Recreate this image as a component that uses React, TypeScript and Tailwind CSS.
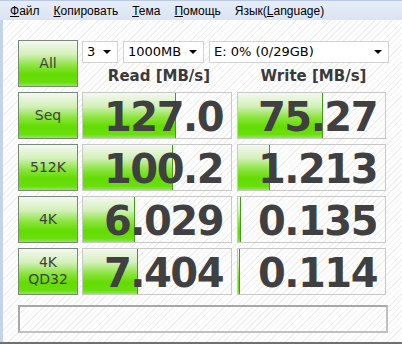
const hatch =
  "bg-[repeating-linear-gradient(135deg,#ffffff_0px,#ffffff_3px,#efefef_3px,#efefef_4px)]";

const green =
  "bg-[linear-gradient(to_bottom,#f4f7f1_0%,#d2f0b8_30%,#8ae43c_55%,#62dc00_75%,#6ade10_92%,#93e857_100%)]";

const menu = [
  { key: "Ф", rest: "айл" },
  { key: "К", rest: "опировать" },
  { key: "Т", rest: "ема" },
  { key: "П", rest: "омощь" },
];

const rows = [
  { label: ["Seq"], read: "127.0", readBar: 93, write: "75.27", writeBar: 85, comic: true },
  { label: ["512K"], read: "100.2", readBar: 90, write: "1.213", writeBar: 32 },
  { label: ["4K"], read: "6.029", readBar: 52, write: "0.135", writeBar: 3 },
  { label: ["4K", "QD32"], read: "7.404", readBar: 55, write: "0.114", writeBar: 2 },
];

function Btn({ lines, comic }: { lines: string[]; comic?: boolean }) {
  return (
    <div
      className={`flex h-[47px] w-[60px] flex-col items-center justify-center border border-[#7a887a] ${green} text-[#404040] font-['DejaVu_Sans',sans-serif] ${
        comic ? "text-[14px]" : "text-[14px] leading-[17px]"
      }`}
    >
      {lines.map((l) => (
        <span key={l}>{l}</span>
      ))}
    </div>
  );
}

function Cell({ value, bar, w }: { value: string; bar: number; w: string }) {
  return (
    <div className={`relative h-[47px] ${w} border border-[#c8c8c8]`}>
      <div
        className={`absolute left-0 top-0 bottom-0 ${green} border-r border-[#3f9f14]`}
        style={{ width: bar }}
      />
      <div className="relative flex h-full items-end justify-end pr-[8px] font-['DejaVu_Sans',sans-serif] text-[40px] leading-[42px] font-bold tracking-[-1.5px] text-[#404040]">
        {value}
      </div>
    </div>
  );
}

function Select({ text, w }: { text: string; w: string }) {
  return (
    <div
      className={`flex h-[22px] ${w} items-center justify-between border border-[#d2d2d2] bg-white pl-[4px] pr-[6px] font-['DejaVu_Sans',sans-serif] text-[13px] text-black`}
    >
      <span>{text}</span>
      <span className="h-0 w-0 border-x-[4px] border-t-[4px] border-x-transparent border-t-black" />
    </div>
  );
}

export default function App() {
  return (
    <div className="flex h-[344px] w-[402px] flex-col overflow-hidden bg-white">
      <div className="flex h-[20px] items-center gap-[14px] border-t border-[#b9c9e3] bg-[linear-gradient(to_bottom,#e6edf8,#dbe4f3)] pl-[10px] font-['Liberation_Sans',sans-serif] text-[12px] text-black">
        {menu.map((m) => (
          <span key={m.key}>
            <span className="underline">{m.key}</span>
            {m.rest}
          </span>
        ))}
        <span>
          Язык(<span className="underline">L</span>anguage)
        </span>
      </div>
      <div className={`flex flex-1 flex-col border-l-[3px] border-[#c3d3ea] pl-[15px] pt-[20px] ${hatch}`}>
        <div className="flex gap-[4px]">
          <Btn lines={["All"]} comic />
          <div className="flex flex-col">
            <div className="flex gap-[5px] pt-[1px]">
              <Select text="3" w="w-[36px]" />
              <Select text="1000MB" w="w-[81px]" />
              <Select text="E: 0% (0/29GB)" w="w-[180px]" />
            </div>
            <div className="flex gap-[5px] pt-[2px] font-['DejaVu_Sans',sans-serif] text-[15px] font-bold text-[#3a3a3a]">
              <div className="w-[150px] pl-[4px] text-center">Read [MB/s]</div>
              <div className="w-[149px] pl-[4px] text-center">Write [MB/s]</div>
            </div>
          </div>
        </div>
        <div className="mt-[4px] flex flex-col gap-[5px]">
          {rows.map((r) => (
            <div key={r.read} className="flex gap-[4px]">
              <Btn lines={r.label} comic={r.comic} />
              <div className="flex gap-[5px]">
                <Cell value={r.read} bar={r.readBar} w="w-[150px]" />
                <Cell value={r.write} bar={r.writeBar} w="w-[149px]" />
              </div>
            </div>
          ))}
        </div>
        <div className="mt-[10px] h-[28px] w-[370px] border-2 border-[#a8a8a8] border-r-[#c0c0c0] border-b-[#c0c0c0]" />
      </div>
      <div className="h-[2px] bg-[#707070]" />
    </div>
  );
}
